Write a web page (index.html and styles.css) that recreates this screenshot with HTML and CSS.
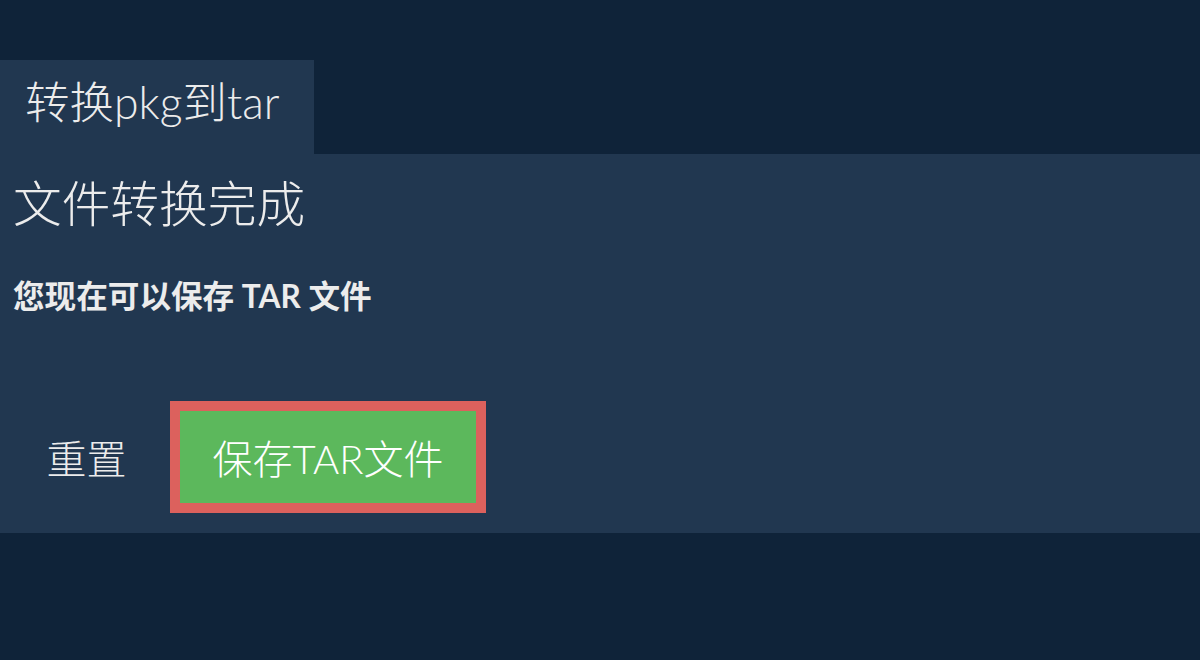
FILE: index.html
```html
<!DOCTYPE html>
<html lang="zh">
<head>
<meta charset="utf-8">
<link rel="stylesheet" href="styles.css">
</head>
<body>
<div class="tabs"><div class="tab">转换pkg到tar</div></div>
<div class="panel">
  <h2 class="title">文件转换完成</h2>
  <p class="subtitle">您现在可以保存 TAR 文件</p>
  <div class="actions">
    <button class="btn-reset">重置</button>
    <button class="btn-save">保存TAR文件</button>
  </div>
</div>
</body>
</html>
```
FILE: styles.css
```css
html, body {
  margin: 0;
  padding: 0;
  background: #0f2339;
  height: 100%;
}
body {
  font-family: Lato, "Noto Sans CJK SC", sans-serif;
  color: #ececec;
  font-weight: 300;
}
.tabs {
  padding-top: 60px;
  display: flex;
}
.tab {
  background: #213750;
  height: 94px;
  line-height: 84px;
  padding: 0 0 10px 25px;
  box-sizing: border-box;
  width: 314px;
  font-size: 44.5px;
  white-space: nowrap;
}
.panel {
  background: #213750;
  height: 379px;
  padding: 0 13px;
  box-sizing: border-box;
  display: flex;
  flex-direction: column;
}
.title {
  margin: 19px 0 0;
  font-size: 48.7px;
  font-weight: 300;
  line-height: 60px;
}
.subtitle {
  margin: 43px 0 0;
  font-size: 31.6px;
  font-weight: 700;
  line-height: 40px;
}
.actions {
  margin-top: 85px;
  display: flex;
  align-items: center;
}
.btn-reset {
  background: none;
  border: none;
  color: #ececec;
  font-family: inherit;
  font-weight: 300;
  font-size: 40px;
  padding: 0 40px 0 30px;
  width: 157px;
  text-align: center;
}
.btn-save {
  background: #5cb85c;
  border: 10px solid #dc615d;
  color: #ffffff;
  font-family: inherit;
  font-weight: 300;
  font-size: 40px;
  width: 316px;
  height: 112px;
  padding: 0;
}
```
